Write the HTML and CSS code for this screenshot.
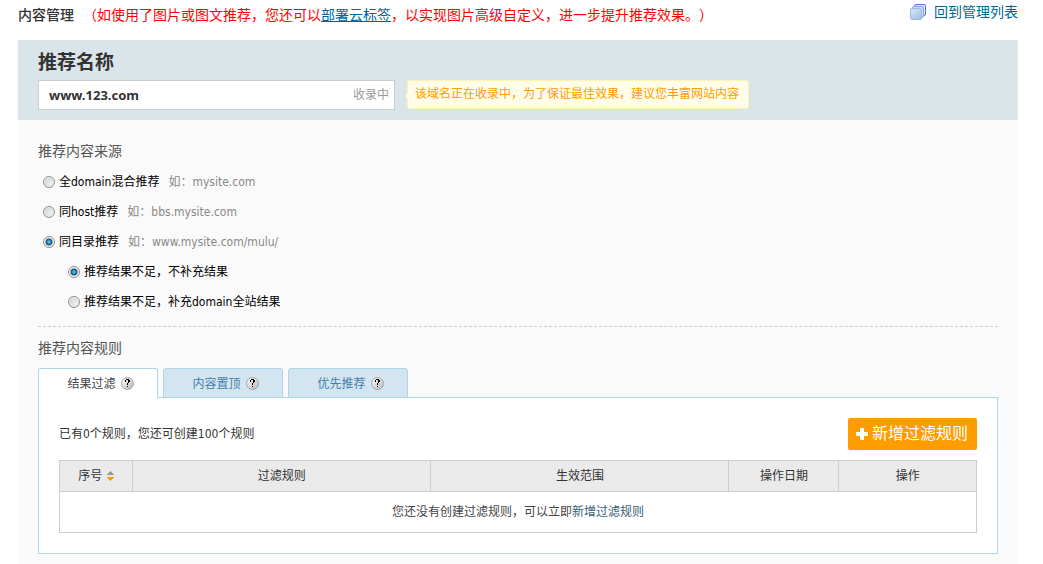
FILE: index.html
```html
<!DOCTYPE html>
<html lang="zh-CN">
<head>
<meta charset="utf-8">
<title>内容管理</title>
<link rel="stylesheet" href="styles.css">
</head>
<body>
<svg class="defs" aria-hidden="true">
  <defs>
    <linearGradient id="ball" x1="0" y1="0" x2="1" y2="1">
      <stop offset="0" stop-color="#ffffff"/>
      <stop offset="1" stop-color="#b5b5b5"/>
    </linearGradient>
    <linearGradient id="sheet" x1="0" y1="0" x2="1" y2="1">
      <stop offset="0" stop-color="#dce9f7"/>
      <stop offset="1" stop-color="#9dbce0"/>
    </linearGradient>
    <symbol id="help" viewBox="0 0 13 13">
      <circle cx="6.5" cy="6.5" r="6" fill="url(#ball)" stroke="#a4a4a4"/>
      <path d="M4 3h1v2H4zM5 2h3v1H5zM8 3h1v2H8zM7 5h1v1H7zM6 6h1v2H6zM7 3h1v2H7zM6 9h1v1H6z"/>
    </symbol>
  </defs>
</svg>
<div class="page">
  <header class="topbar">
    <h1 class="topbar-title">内容管理</h1>
    <p class="topbar-note">（如使用了图片或图文推荐，您还可以<a href="#">部署云标签</a>，以实现图片高级自定义，进一步提升推荐效果。）</p>
    <a class="back" href="#">
      <svg width="16" height="16" viewBox="0 0 16 16" aria-hidden="true">
        <rect x="4.5" y="0.5" width="11" height="11" rx="1.5" fill="#dfeafa" stroke="#5273de"/>
        <rect x="2.5" y="2.5" width="11" height="11" rx="1.5" fill="#c9dcf2" stroke="#86a8da"/>
        <rect x="0.5" y="4.5" width="11" height="11" rx="1.5" fill="url(#sheet)" stroke="#9dbbe0"/>
      </svg>
      <span>回到管理列表</span>
    </a>
  </header>
  <main class="panel">
    <section class="name">
      <label class="name-label" for="domain">推荐名称</label>
      <div class="name-row">
        <div class="field">
          <input class="field-input" id="domain" type="text" value="www.123.com">
          <span class="field-state">收录中</span>
        </div>
        <p class="tip">该域名正在收录中，为了保证最佳效果，建议您丰富网站内容</p>
      </div>
    </section>
    <div class="content">
      <fieldset class="source">
        <legend class="heading">推荐内容来源</legend>
        <label class="option"><input type="radio" name="source"><span>全domain混合推荐</span><span class="example">如：mysite.com</span></label>
        <label class="option"><input type="radio" name="source"><span>同host推荐</span><span class="example">如：bbs.mysite.com</span></label>
        <label class="option"><input type="radio" name="source" checked><span>同目录推荐</span><span class="example">如：www.mysite.com/mulu/</span></label>
        <label class="option nested"><input type="radio" name="fill" checked><span>推荐结果不足，不补充结果</span></label>
        <label class="option nested"><input type="radio" name="fill"><span>推荐结果不足，补充domain全站结果</span></label>
      </fieldset>
      <section class="rules">
        <h2 class="heading">推荐内容规则</h2>
        <nav class="tabs">
          <button class="tab active" type="button">结果过滤<svg class="help" aria-hidden="true"><use href="#help"/></svg></button>
          <button class="tab" type="button">内容置顶<svg class="help" aria-hidden="true"><use href="#help"/></svg></button>
          <button class="tab" type="button">优先推荐<svg class="help" aria-hidden="true"><use href="#help"/></svg></button>
        </nav>
        <div class="box">
          <div class="box-head">
            <p>已有0个规则，您还可创建100个规则</p>
            <button class="add" type="button">
              <svg width="12" height="12" viewBox="0 0 12 12" aria-hidden="true"><path d="M4 0h4v4h4v4H8v4H4V8H0V4h4z" fill="#fff"/></svg>
              <span>新增过滤规则</span>
            </button>
          </div>
          <table class="grid">
            <colgroup><col class="c-no"><col class="c-rule"><col class="c-scope"><col class="c-date"><col class="c-act"></colgroup>
            <thead>
              <tr>
                <th>序号<svg class="sort" width="7" height="10" viewBox="0 0 7 10" aria-hidden="true"><path d="M3 0h1v1h1v1h1v1h1v1H0V3h1V2h1V1h1z" fill="#999"/><path d="M0 6h7v1H6v1H5v1H4v1H3V9H2V8H1V7H0z" fill="#ff9c00"/></svg></th>
                <th>过滤规则</th><th>生效范围</th><th>操作日期</th><th>操作</th>
              </tr>
            </thead>
            <tbody>
              <tr><td colspan="5">您还没有创建过滤规则，可以立即<a href="#">新增过滤规则</a></td></tr>
            </tbody>
          </table>
        </div>
      </section>
    </div>
  </main>
</div>
</body>
</html>
```
FILE: styles.css
```css
* { box-sizing: border-box; }
body {
  margin: 0;
  background: #fff;
  color: #333;
  font: 12px/20px "DejaVu Sans Condensed", "Noto Sans CJK SC", sans-serif;
  text-spacing-trim: space-all;
}
h1, h2, p { margin: 0; }
button, input { font: inherit; }
.defs { position: absolute; width: 0; height: 0; }
.page {
  display: flex;
  flex-direction: column;
  min-height: 100vh;
  padding: 0 25px 0 18px;
}
.topbar {
  display: flex;
  align-items: flex-start;
  height: 40px;
  padding-top: 2px;
  font-size: 14px;
}
.topbar-title { margin-top: 3px; font-size: 14px; font-weight: 500; }
.topbar-note { margin: 3px 0 0 9px; color: #f00; }
.topbar-note a { color: #069; text-decoration: underline; }
.back {
  display: flex;
  align-items: center;
  gap: 8px;
  margin-left: auto;
  color: #069;
  text-decoration: none;
}
.panel { flex: 1; background: #fafafa; }
.name { padding: 10px 20px; background: #dae5ea; }
.name-label {
  display: block;
  margin-bottom: 6px;
  font-size: 19px;
  line-height: 24px;
  font-weight: 700;
}
.name-row { display: flex; gap: 12px; }
.field {
  display: flex;
  align-items: center;
  width: 357px;
  height: 30px;
  padding: 0 5px 0 10px;
  border: 1px solid #ccc;
  background: #fff;
}
.field-input {
  flex: 1;
  min-width: 0;
  padding: 0;
  border: 0;
  outline: 0;
  background: none;
  color: #333;
  font-family: "Noto Sans", sans-serif;
  font-size: 13px;
  font-weight: 700;
}
.field-state { color: #999; }
.tip {
  position: relative;
  height: 29px;
  padding: 0 9px 0 7px;
  border: 1px solid #fff3b0;
  border-radius: 3px;
  background: #fffde8;
  color: #ff9c00;
  line-height: 27px;
}
.tip::before {
  content: "";
  position: absolute;
  top: 12px;
  left: -3px;
  border: 3px solid transparent;
  border-left: 0;
  border-right-color: #fffde8;
}
.content { padding: 20px 20px 10px; }
.source {
  min-width: 0;
  margin: 0;
  padding: 0 0 9px;
  border: 0;
  border-bottom: 1px dashed #ccc;
}
.heading {
  margin: 0;
  padding: 0;
  color: #555;
  font-size: 14px;
  line-height: 22px;
  font-weight: 400;
}
.source .heading { margin-bottom: 5px; }
.option {
  display: flex;
  align-items: center;
  height: 30px;
  padding-left: 5px;
  color: #000;
}
.nested { padding-left: 30px; }
.option input {
  appearance: none;
  width: 12px;
  height: 12px;
  margin: 0 4px 0 0;
  border: 1px solid #8e8f8f;
  border-radius: 50%;
  background: radial-gradient(circle at 65% 65%, #f0f0f0, #c4c8cc);
  box-shadow: inset 0 0 0 1px #f4f4f4;
}
.option input:checked {
  background: radial-gradient(circle, #4fb4dd 0 1px, #0e4a70 3px, #e8e8e8 4px);
}
.example { margin-left: 9px; color: #888; }
.rules { padding-top: 10px; }
.tabs { display: flex; gap: 5px; margin-top: 9px; }
.tab {
  display: flex;
  align-items: center;
  justify-content: center;
  gap: 5px;
  width: 120px;
  height: 30px;
  margin-bottom: -1px;
  padding: 1px 0 0 5px;
  border: 1px solid #afd4e9;
  border-radius: 3px 3px 0 0;
  background: #d3e5f0;
  color: #4580a8;
}
.tab.active {
  position: relative;
  border-bottom-color: #fff;
  background: #fff;
  color: #444;
}
.help { width: 13px; height: 13px; }
.box { padding: 20px; border: 1px solid #afd4e9; background: #fff; }
.box-head {
  display: flex;
  align-items: center;
  justify-content: space-between;
  margin-bottom: 10px;
}
.add {
  display: flex;
  align-items: center;
  gap: 4px;
  height: 32px;
  padding: 0 9px 0 8px;
  border: 0;
  border-radius: 2px;
  background: #ff9c00;
  color: #fff;
  font-size: 16px;
}
.grid { width: 100%; border-collapse: collapse; table-layout: fixed; }
.grid th, .grid td { padding: 0; border: 1px solid #ccc; text-align: center; }
.grid th { height: 31px; background: #eaeaea; font-weight: 400; }
.grid td { height: 41px; color: #444; }
.grid a { color: #366075; text-decoration: none; }
.sort { margin-left: 5px; vertical-align: -1px; }
.c-no { width: 8%; }
.c-rule, .c-scope { width: 32.5%; }
.c-date { width: 12%; }
.c-act { width: 15%; }
```
